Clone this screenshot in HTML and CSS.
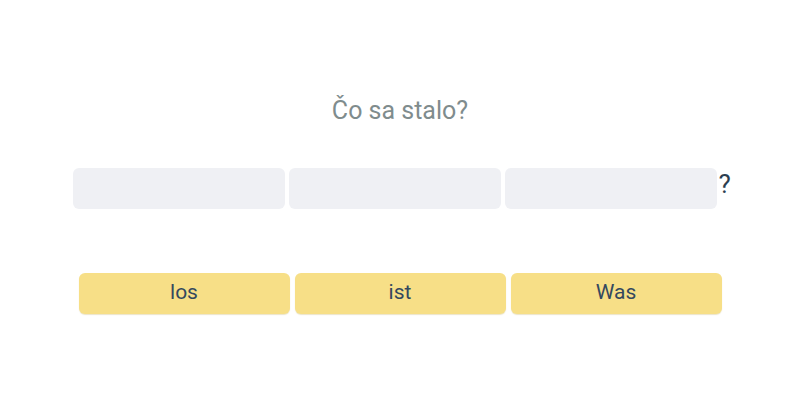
FILE: index.html
```html
<!DOCTYPE html>
<html>
<head>
<meta charset="utf-8">
<link rel="stylesheet" href="styles.css">
</head>
<body>
<main class="exercise">
  <h1 class="prompt">Čo sa stalo?</h1>
  <div class="answer-row">
    <div class="slot"></div>
    <div class="slot"></div>
    <div class="slot"></div>
    <span class="punct">?</span>
  </div>
  <div class="choices">
    <button class="choice">los</button>
    <button class="choice">ist</button>
    <button class="choice">Was</button>
  </div>
</main>
</body>
</html>
```
FILE: styles.css
```css
html, body {
  margin: 0;
  padding: 0;
  background: #ffffff;
}
body {
  width: 800px;
  height: 400px;
  font-family: Roboto, "Noto Sans", sans-serif;
}
.exercise {
  display: flex;
  flex-direction: column;
  align-items: center;
  padding-top: 94px;
}
.prompt {
  margin: 0;
  font-size: 25px;
  font-weight: 400;
  color: #7f8c8d;
  line-height: 34px;
  height: 34px;
}
.answer-row {
  display: flex;
  align-items: center;
  gap: 4px;
  margin-top: 40px;
  margin-left: 6px;
}
.slot {
  width: 212px;
  height: 41px;
  background: #eff0f4;
  border-radius: 6px;
}
.punct {
  font-size: 26px;
  color: #2c3e50;
  margin-left: -2px;
  margin-top: -10px;
  width: 15px;
}
.choices {
  display: flex;
  gap: 5px;
  margin-top: 64px;
}
.choice {
  width: 211px;
  height: 41px;
  border: none;
  border-radius: 6px;
  background: #f7df87;
  box-shadow: 0 1px 1px rgba(200, 180, 100, 0.35);
  font-family: Roboto, "Noto Sans", sans-serif;
  font-size: 21px;
  color: #34495e;
  padding: 0 0 3px 0;
  cursor: pointer;
}
```
